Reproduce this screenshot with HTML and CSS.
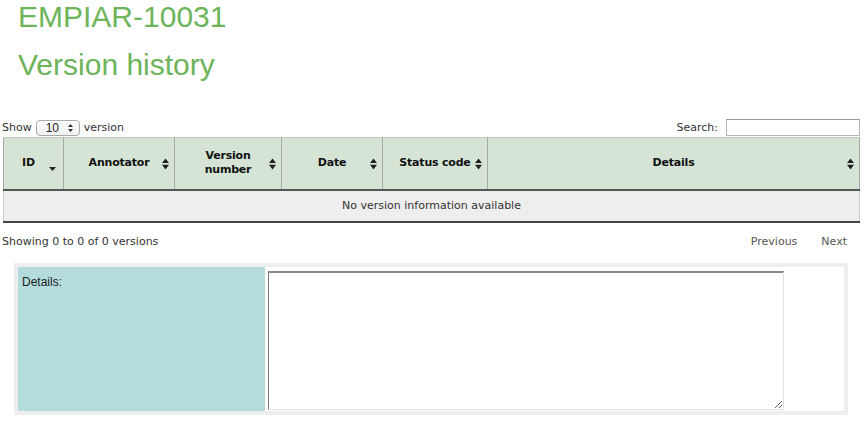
FILE: index.html
```html
<!DOCTYPE html>
<html>
<head>
<meta charset="utf-8">
<link rel="stylesheet" href="styles.css">
</head>
<body>
<div class="page">
  <h1 class="title">EMPIAR-10031</h1>
  <h2 class="title sub">Version history</h2>

  <div class="controls">
    <div class="length">
      <span>Show</span>
      <span class="select"><span class="select-val">10</span><svg class="select-arrows" width="5" height="8" viewBox="0 0 5 8"><path d="M2.5 0 L5 3 H0 Z M2.5 8 L5 5 H0 Z" fill="#333"/></svg></span>
      <span>version</span>
    </div>
    <label class="search">Search: <input class="search-input" type="text"></label>
  </div>

  <table class="versions">
    <colgroup>
      <col class="c-id"><col class="c-ann"><col class="c-ver"><col class="c-date"><col class="c-status"><col>
    </colgroup>
    <thead>
      <tr>
        <th class="sorted">ID<svg class="sort down" width="7" height="12" viewBox="0 0 7 12"><path d="M0 7 H7 L3.5 11 Z" fill="#222"/></svg></th>
        <th>Annotator<svg class="sort" width="7" height="12" viewBox="0 0 7 12"><path d="M3.5 0.5 L7 5 H0 Z M0 6.8 H7 L3.5 11.5 Z" fill="#222"/></svg></th>
        <th>Version<br>number<svg class="sort" width="7" height="12" viewBox="0 0 7 12"><path d="M3.5 0.5 L7 5 H0 Z M0 6.8 H7 L3.5 11.5 Z" fill="#222"/></svg></th>
        <th>Date<svg class="sort" width="7" height="12" viewBox="0 0 7 12"><path d="M3.5 0.5 L7 5 H0 Z M0 6.8 H7 L3.5 11.5 Z" fill="#222"/></svg></th>
        <th class="nowrap">Status code<svg class="sort" width="7" height="12" viewBox="0 0 7 12"><path d="M3.5 0.5 L7 5 H0 Z M0 6.8 H7 L3.5 11.5 Z" fill="#222"/></svg></th>
        <th>Details<svg class="sort" width="7" height="12" viewBox="0 0 7 12"><path d="M3.5 0.5 L7 5 H0 Z M0 6.8 H7 L3.5 11.5 Z" fill="#222"/></svg></th>
      </tr>
    </thead>
    <tbody>
      <tr><td class="empty" colspan="6">No version information available</td></tr>
    </tbody>
  </table>

  <div class="info-row">
    <div class="info">Showing 0 to 0 of 0 versions</div>
    <div class="paging"><span>Previous</span><span>Next</span></div>
  </div>

  <table class="details">
    <tr>
      <td class="details-label">Details:</td>
      <td class="details-field"><textarea class="details-text"></textarea></td>
    </tr>
  </table>
</div>
</body>
</html>
```

FILE: styles.css
```css
html, body {
  margin: 0;
  padding: 0;
  background: #fff;
}

.page {
  padding: 0 4px 0 2px;
  font-family: "DejaVu Sans", Verdana, sans-serif;
  font-size: 11px;
  color: #333;
}

.title {
  margin: 0;
  padding-left: 16px;
  font-family: "Liberation Sans", Arial, sans-serif;
  font-weight: normal;
  font-size: 30px;
  line-height: 34px;
  color: #6db45b;
}

.sub {
  margin-top: 14px;
}

.controls {
  margin-top: 36px;
  height: 19px;
  display: flex;
  justify-content: space-between;
  align-items: center;
}

.length {
  display: flex;
  align-items: center;
  gap: 4px;
  font-size: 11px;
  color: #333;
}

.select {
  display: inline-flex;
  align-items: center;
  justify-content: space-between;
  box-sizing: border-box;
  width: 44px;
  height: 16px;
  padding: 0 6px 0 9px;
  border: 1px solid #aaa;
  border-radius: 4px;
  background: linear-gradient(#fff, #f1f1f1);
  color: #222;
  font-family: "Liberation Sans", Arial, sans-serif;
  font-size: 12px;
}

.search {
  display: flex;
  align-items: center;
  gap: 8px;
  color: #333;
}

.search-input {
  box-sizing: border-box;
  width: 134px;
  height: 17px;
  margin: 0;
  padding: 0 3px;
  border: 1px solid #b5b5b5;
  border-top-color: #999;
  background: #fff;
}

.versions {
  border-collapse: collapse;
  margin-left: 1px;
  width: calc(100% - 1px);
}

.c-id { width: 60px; }
.c-ann { width: 111px; }
.c-ver { width: 107px; }
.c-date { width: 101px; }
.c-status { width: 105px; }

.versions th {
  position: relative;
  height: 52px;
  padding: 3px 12px;
  background: #d6e4d6;
  border: 1px solid #a8a8a8;
  border-top-color: #c4c4c4;
  border-bottom: 2px solid #555;
  font-weight: bold;
  font-size: 11px;
  line-height: 14px;
  letter-spacing: -0.2px;
  color: #111;
  text-align: center;
  box-sizing: border-box;
}

.versions th.sorted {
  padding-right: 22px;
}

.versions th.nowrap {
  white-space: nowrap;
  padding: 3px 10px;
}

.sort {
  position: absolute;
  right: 5px;
  top: 20px;
}

.sort.down {
  right: 7px;
  top: 22px;
}

.versions td.empty {
  height: 32px;
  padding: 0;
  background: #eeeeee;
  border-left: 1px solid #ccc;
  border-right: 1px solid #ccc;
  border-bottom: 2px solid #444;
  text-align: center;
  color: #333;
  box-sizing: border-box;
}

.info-row {
  display: flex;
  justify-content: space-between;
  padding-top: 12px;
  line-height: 14px;
  color: #333;
}

.paging {
  display: flex;
  gap: 24px;
  padding-right: 13px;
  color: #555;
}

.details {
  margin: 14px 0 0 12px;
  width: 834px;
  border: 4px solid #eeeeee;
  border-spacing: 0;
}

.details-label {
  width: 247px;
  height: 144px;
  padding: 8px 4px;
  box-sizing: border-box;
  vertical-align: top;
  background: #b5dcdc;
  font-family: "Liberation Sans", Arial, sans-serif;
  font-size: 12px;
  color: #222;
}

.details-field {
  padding: 4px 3px 1px 3px;
  vertical-align: top;
}

.details-text {
  display: block;
  box-sizing: border-box;
  width: 516px;
  height: 139px;
  margin: 0;
  border: 1px solid #e2e2e2;
  border-top: 2px solid #888;
  border-left: 1px solid #777;
  resize: both;
}
```
